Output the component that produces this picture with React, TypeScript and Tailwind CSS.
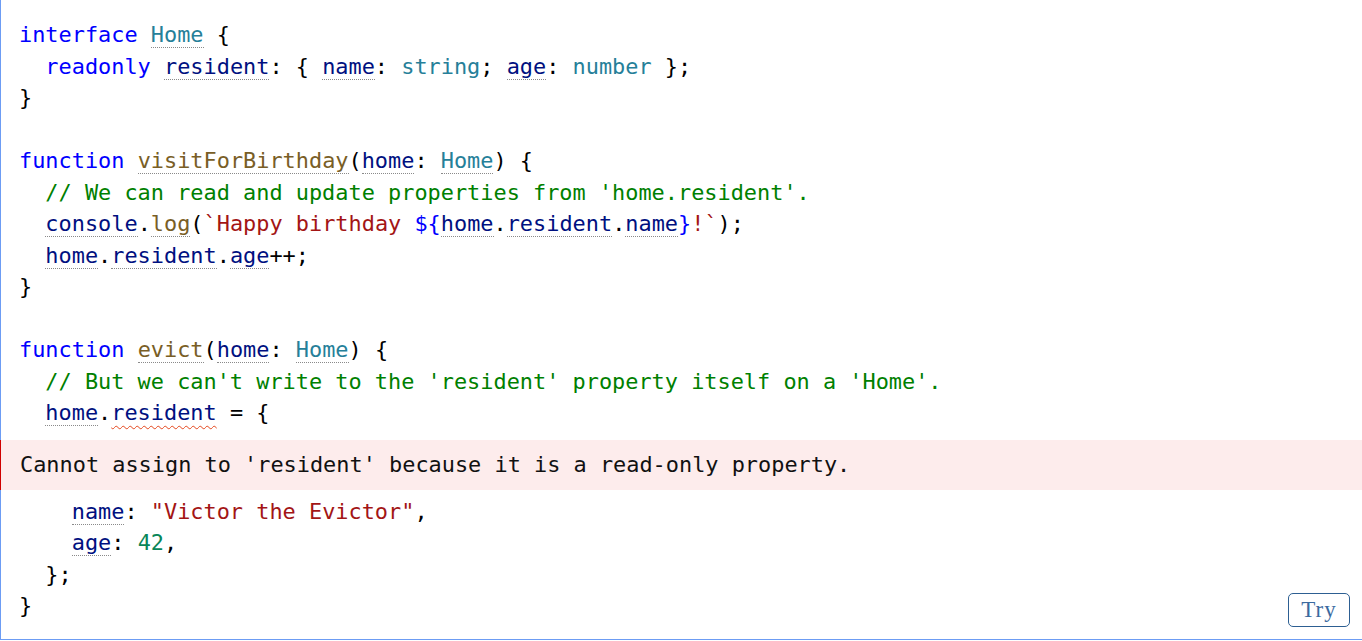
import React from "react";

const dot = "border-b border-dotted border-[#8a8a8a]";

const K = ({ c }: { c: string }) => <span className="text-[#0000ff]">{c}</span>;
const T = ({ c, d = true }: { c: string; d?: boolean }) => (
  <span className={`text-[#267f99] ${d ? dot : ""}`}>{c}</span>
);
const F = ({ c }: { c: string }) => <span className={`text-[#795e26] ${dot}`}>{c}</span>;
const P = ({ c }: { c: string }) => <span className={`text-[#001080] ${dot}`}>{c}</span>;
const C = ({ c }: { c: string }) => <span className="text-[#008000]">{c}</span>;
const S = ({ c }: { c: string }) => <span className="text-[#a31515]">{c}</span>;
const N = ({ c }: { c: string }) => <span className="text-[#098658]">{c}</span>;

const L = ({ children }: { children?: React.ReactNode }) => (
  <div className="h-[31.5px] whitespace-pre">{children}</div>
);

export default function App() {
  return (
    <div className="w-full h-[641px] bg-white overflow-hidden">
      <div
        className="relative h-[640px] border-l border-b border-[#6c9cf4] pt-[19px] text-[#000000] text-[21.9px] leading-[31.5px]"
        style={{ fontFamily: '"DejaVu Sans Mono", monospace' }}
      >
        <div className="pl-[18px]">
          <L>
            <K c="interface" /> <T c="Home" /> {"{"}
          </L>
          <L>
            {"  "}
            <K c="readonly" /> <P c="resident" />: {"{ "}
            <P c="name" />: <T c="string" d={false} />; <P c="age" />: <T c="number" d={false} />
            {" };"}
          </L>
          <L>{"}"}</L>
          <L> </L>
          <L>
            <K c="function" /> <F c="visitForBirthday" />(<P c="home" />: <T c="Home" />) {"{"}
          </L>
          <L>
            {"  "}
            <C c="// We can read and update properties from 'home.resident'." />
          </L>
          <L>
            {"  "}
            <P c="console" />.<F c="log" />(<S c="`Happy birthday " />
            <K c="${" />
            <P c="home" />.<P c="resident" />.<P c="name" />
            <K c="}" />
            <S c="!`" />
            {");"}
          </L>
          <L>
            {"  "}
            <P c="home" />.<P c="resident" />.<P c="age" />
            {"++;"}
          </L>
          <L>{"}"}</L>
          <L> </L>
          <L>
            <K c="function" /> <F c="evict" />(<P c="home" />: <T c="Home" />) {"{"}
          </L>
          <L>
            {"  "}
            <C c="// But we can't write to the 'resident' property itself on a 'Home'." />
          </L>
          <L>
            {"  "}
            <P c="home" />.
            <span className="text-[#001080] underline decoration-wavy decoration-[#e4461c] decoration-1 underline-offset-[5px]">
              resident
            </span>
            {" = {"}
          </L>
        </div>
        <div className="-ml-px mt-[11px] mb-[6px] h-[50px] flex items-center border-l border-[#d00000] bg-[#fdecec] pl-[19px] whitespace-pre text-[#111]">
          Cannot assign to 'resident' because it is a read-only property.
        </div>
        <div className="pl-[18px]">
          <L>
            {"    "}
            <P c="name" />: <S c={'"Victor the Evictor"'} />,
          </L>
          <L>
            {"    "}
            <P c="age" />: <N c="42" />,
          </L>
          <L>{"  };"}</L>
          <L>{"}"}</L>
        </div>
        <button
          className="absolute right-[12px] bottom-[12px] w-[62px] h-[34px] flex items-center justify-center rounded-[5px] border border-[#2d5f92] bg-white text-[#3b6aa0] text-[23px] tracking-[1px]"
          style={{ fontFamily: '"Liberation Serif", serif' }}
        >
          Try
        </button>
      </div>
    </div>
  );
}
